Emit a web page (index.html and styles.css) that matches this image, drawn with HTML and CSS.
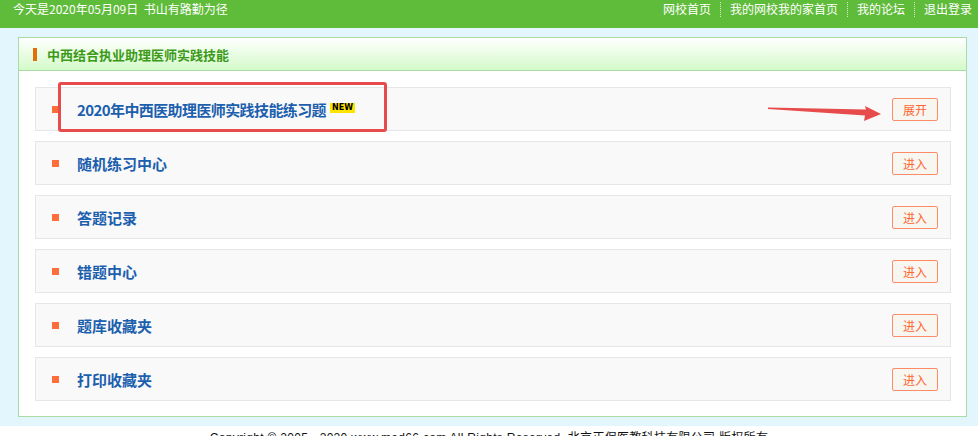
FILE: index.html
```html
<!DOCTYPE html>
<html lang="zh-CN">
<head>
<meta charset="utf-8">
<title>中西结合执业助理医师实践技能</title>
<link rel="stylesheet" href="styles.css">
</head>
<body>
<div class="topbar">
  <div class="today">今天是2020年05月09日&nbsp;&nbsp;书山有路勤为径</div>
  <div class="links">
    <a href="#">网校首页</a><span class="sep"></span>
    <a href="#">我的网校我的家首页</a><span class="sep"></span>
    <a href="#">我的论坛</a><span class="sep"></span>
    <a href="#">退出登录</a>
  </div>
</div>
<div class="main">
  <div class="panel">
    <div class="panel-head"><span class="head-bar"></span>中西结合执业助理医师实践技能</div>
    <div class="panel-body">
      <div class="row first">
        <span class="dot"></span>
        <span class="title"><span class="tight">2020年中西医助理医师实践技能练习题</span><span class="new">NEW</span></span>
        <a class="btn" href="#">展开</a>
        <span class="mark"></span>
        <svg class="arrow" width="120" height="30" viewBox="0 0 120 30"><polygon points="0,10.5 98,12.5 97,9 113,17 96,24 97,18.5 0,12" fill="#e84b4b"/></svg>
      </div>
      <div class="row"><span class="dot"></span><span class="title">随机练习中心</span><a class="btn" href="#">进入</a></div>
      <div class="row"><span class="dot"></span><span class="title">答题记录</span><a class="btn" href="#">进入</a></div>
      <div class="row"><span class="dot"></span><span class="title">错题中心</span><a class="btn" href="#">进入</a></div>
      <div class="row"><span class="dot"></span><span class="title">题库收藏夹</span><a class="btn" href="#">进入</a></div>
      <div class="row"><span class="dot"></span><span class="title">打印收藏夹</span><a class="btn" href="#">进入</a></div>
    </div>
  </div>
</div>
<div class="footer">Copyright © 2005 - 2020 www.med66.com All Rights Reserved. 北京正保医教科技有限公司 版权所有</div>
</body>
</html>
```
FILE: styles.css
```css
* { box-sizing: border-box; }
body {
  margin: 0;
  font-family: "Noto Sans CJK SC", "Liberation Sans", sans-serif;
  font-size: 12px;
  background: #fff;
}
a { text-decoration: none; }
.topbar {
  height: 28px;
  background: #5fbb3a;
  color: #fff;
  display: flex;
  justify-content: space-between;
  align-items: flex-start;
  padding: 0 6px 0 13px;
  font-size: 12px;
  line-height: 18px;
}
.links { display: flex; align-items: center; }
.links a { color: #fff; }
.sep {
  display: inline-block;
  width: 0;
  height: 15px;
  border-left: 1px dotted #d8efc8;
  margin: 0 9px;
}
.main {
  background: #e3f5fd;
  padding: 9px 11px 9px 18px;
}
.panel {
  border: 1px solid #a9dba5;
  background: #fff;
}
.panel-head {
  height: 33px;
  border-bottom: 1px solid #a9dba5;
  background: linear-gradient(#ffffff, #d4fac9);
  display: flex;
  align-items: center;
  padding-left: 14px;
  font-size: 13px;
  font-weight: bold;
  color: #3c9a18;
}
.head-bar {
  width: 4px;
  height: 13px;
  background: #e0700a;
  margin-right: 10px;
}
.panel-body {
  padding: 16px 15px 15px 16px;
  display: flex;
  flex-direction: column;
  gap: 10px;
}
.row {
  position: relative;
  height: 44px;
  background: #f9f9f9;
  border: 1px solid #e6e6e6;
  display: flex;
  align-items: center;
  padding: 0 12px 0 16px;
}
.dot {
  width: 7px;
  height: 7px;
  background: #ff6d3a;
  margin-right: 18px;
}
.title {
  flex: 1;
  font-size: 15px;
  font-weight: bold;
  color: #1b5fae;
  display: flex;
  align-items: center;
}
.tight { letter-spacing: -0.6px; }
.new {
  font-family: "DejaVu Sans", sans-serif;
  font-size: 8px;
  font-weight: bold;
  color: #000;
  background: #ffe400;
  padding: 0 2px;
  line-height: 10px;
  margin-left: 4px;
  margin-top: -3px;
}
.btn {
  width: 46px;
  height: 23px;
  border: 1px solid #ff8c66;
  border-radius: 2px;
  background: #f8f6f0;
  color: #ff6633;
  font-size: 12px;
  display: flex;
  align-items: center;
  justify-content: center;
}
.mark {
  position: absolute;
  left: 22px;
  top: -6px;
  width: 329px;
  height: 50px;
  border: 3px solid #e84b4b;
  border-radius: 3px;
}
.arrow {
  position: absolute;
  left: 732px;
  top: 9px;
}
.footer {
  text-align: center;
  font-size: 12px;
  line-height: 16px;
  padding-top: 4px;
  color: #111;
  letter-spacing: 0.3px;
  font-family: "Liberation Sans", "Noto Sans CJK SC", sans-serif;
}
```
